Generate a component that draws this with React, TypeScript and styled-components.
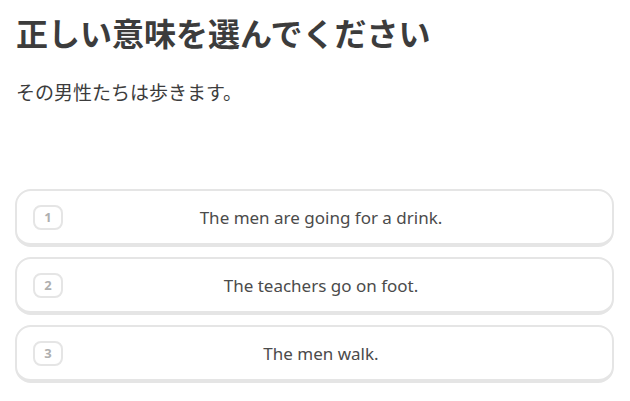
import React from "react";
import styled, { createGlobalStyle } from "styled-components";

const Global = createGlobalStyle`
  html, body { margin: 0; padding: 0; background: #ffffff; }
  body { font-family: "Noto Sans", "Noto Sans CJK JP", sans-serif; }
`;

const Page = styled.div`
  width: 630px;
  height: 401px;
  box-sizing: border-box;
  padding: 12px 16px 0 15px;
  display: flex;
  flex-direction: column;
`;

const Title = styled.h1`
  margin: 0;
  font-family: "Noto Sans CJK JP", sans-serif;
  font-weight: 700;
  font-size: 32px;
  line-height: 40px;
  color: #3c3c3c;
  padding-left: 1px;
`;

const Prompt = styled.p`
  margin: 26px 0 0 0;
  font-family: "Noto Sans CJK JP", sans-serif;
  font-size: 19px;
  line-height: 28px;
  color: #3c3c3c;
  padding-left: 1px;
`;

const Choices = styled.ul`
  list-style: none;
  margin: 83px 0 0 0;
  padding: 0;
  display: flex;
  flex-direction: column;
  gap: 10px;
`;

const Choice = styled.li`
  box-sizing: border-box;
  height: 58px;
  border: 2px solid #e5e5e5;
  border-bottom-width: 4px;
  border-radius: 16px;
  display: flex;
  align-items: center;
  padding: 0 16px;
`;

const Badge = styled.span`
  box-sizing: border-box;
  width: 30px;
  height: 25px;
  border: 2px solid #e5e5e5;
  border-radius: 8px;
  display: flex;
  align-items: center;
  justify-content: center;
  font-family: "Noto Sans", sans-serif;
  font-weight: 700;
  font-size: 13px;
  color: #afafaf;
  flex: none;
`;

const Label = styled.span`
  flex: 1;
  text-align: center;
  font-family: "Noto Sans", sans-serif;
  font-size: 17px;
  color: #4b4b4b;
  padding-right: 17px;
`;

const choices = [
  "The men are going for a drink.",
  "The teachers go on foot.",
  "The men walk.",
];

export default function App() {
  return (
    <>
      <Global />
      <Page>
        <Title>正しい意味を選んでください</Title>
        <Prompt>その男性たちは歩きます。</Prompt>
        <Choices>
          {choices.map((c, i) => (
            <Choice key={i}>
              <Badge>{i + 1}</Badge>
              <Label>{c}</Label>
            </Choice>
          ))}
        </Choices>
      </Page>
    </>
  );
}
